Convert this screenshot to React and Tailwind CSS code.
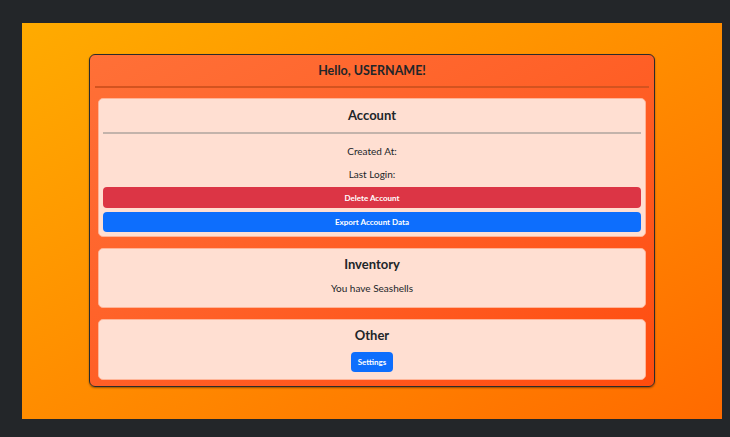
export default function App() {
  return (
    <div className="h-[437px] w-[730px] bg-[#232629] pl-[22px] pt-[23px] font-['Lato','Open_Sans',sans-serif] text-[#212529]">
      <div className="h-[396px] w-[700px] bg-gradient-to-br from-[#ffab00] to-[#ff6a00] pl-[67px] pt-[31px]">
        <div className="h-[333px] w-[566px] rounded-[6px] border border-[#2b2b2b] bg-gradient-to-br from-[#ff7037] to-[#ff4c0c] shadow-[0_1px_2px_rgba(0,0,0,0.4)]">
          <div className="pt-[7px] text-center text-[12.5px] font-bold leading-[17px]">Hello, USERNAME!</div>
          <div className="mx-[5px] mt-[7px] h-[2px] bg-[#d4531f]" />

          <div className="mx-[8px] mt-[10px] flex flex-col gap-[11px]">
            <section className="h-[139px] rounded-[5px] border border-[#ffb497] bg-[#ffdfd2] px-[4px] pt-[8px] text-center">
              <h2 className="text-[13px] font-bold leading-[17px]">Account</h2>
              <div className="mt-[8px] h-[2px] bg-[#c3b3ab]" />
              <p className="mt-[10px] text-[10px] leading-[14px]">Created At:</p>
              <p className="mt-[9px] text-[10px] leading-[14px]">Last Login:</p>
              <button
                type="button"
                className="mt-[6px] flex h-[21px] w-full items-center justify-center rounded-[4px] bg-[#dc3545] text-[8px] font-bold text-white"
              >
                Delete Account
              </button>
              <button
                type="button"
                className="mt-[4px] flex h-[20px] w-full items-center justify-center rounded-[4px] bg-[#0d6efd] text-[8px] font-bold text-white"
              >
                Export Account Data
              </button>
            </section>

            <section className="h-[60px] rounded-[5px] border border-[#ffb497] bg-[#ffdfd2] pt-[7px] text-center">
              <h2 className="text-[13px] font-bold leading-[17px]">Inventory</h2>
              <p className="mt-[8px] text-[10px] leading-[14px]">You have Seashells</p>
            </section>

            <section className="h-[61px] rounded-[5px] border border-[#ffb497] bg-[#ffdfd2] pt-[7px] text-center">
              <h2 className="text-[13px] font-bold leading-[17px]">Other</h2>
              <button
                type="button"
                className="mt-[8px] h-[20px] w-[42px] rounded-[4px] bg-[#0d6efd] text-[8px] font-bold text-white"
              >
                Settings
              </button>
            </section>
          </div>
        </div>
      </div>
    </div>
  );
}
